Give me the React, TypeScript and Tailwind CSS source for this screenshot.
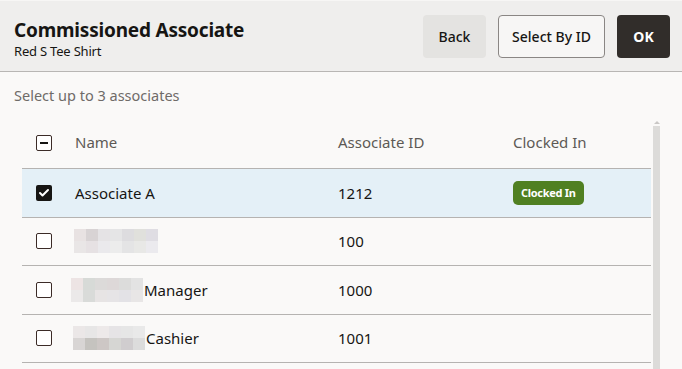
import { Check } from "lucide-react";

type Row = {
    blur?: string[][];
    name: string;
    id: string;
    clocked?: boolean;
    checked?: boolean;
};

const rows: Row[] = [
    { name: "Associate A", id: "1212", clocked: true, checked: true },
    {
        blur: [
            ["#e8e2e2", "#d8d3d4", "#e5e3e5", "#e5e5e6", "#dddcdf", "#e0e0dc", "#dfdde3"],
            ["#e9e6e6", "#e6e1e3", "#eae9ec", "#ececec", "#e4e4e5", "#e8e8e6", "#ebeaee"],
        ],
        name: "",
        id: "100",
    },
    {
        blur: [
            ["#ede4e4", "#d7dad7", "#dcdad9", "#ddd8d8", "#dcdcdb", "#e3e3e3"],
            ["#ebe9e9", "#d9dbd9", "#e7e4e4", "#e6e4e6", "#e3e2e6", "#e8e6e6"],
        ],
        name: "Manager",
        id: "1000",
    },
    {
        blur: [
            ["#ebe7e7", "#e7e6e6", "#ede9e9", "#e6e4e6", "#e6e6e6", "#e9e9e9"],
            ["#d8d5d4", "#c5c3bf", "#cdc7c5", "#d6d6d3", "#d0cdcf", "#dcdcdc"],
        ],
        name: "Cashier",
        id: "1001",
    },
];

function Blur({ cells }: { cells: string[][] }) {
    return (
        <div className="flex flex-col">
            {cells.map((line, i) => (
                <div key={i} className="flex">
                    {line.map((c, j) => (
                        <div key={j} className="w-[12px] h-[12px]" style={{ backgroundColor: c }} />
                    ))}
                </div>
            ))}
        </div>
    );
}

function Box({ state }: { state: "on" | "off" | "mixed" }) {
    if (state === "on") {
        return (
            <div className="w-[16px] h-[16px] rounded-[2px] bg-[#161513] flex items-center justify-center">
                <Check className="w-[12px] h-[12px] text-white" strokeWidth={4} />
            </div>
        );
    }
    return (
        <div className="w-[16px] h-[16px] rounded-[2px] border-[1.5px] border-[#3b2b27] bg-white flex items-center justify-center">
            {state === "mixed" && <div className="w-[8px] h-[2px] bg-[#161513]" />}
        </div>
    );
}

export default function App() {
    return (
        <div className="w-[682px] h-[369px] overflow-hidden bg-[#faf9f8] text-[#161513] font-['Noto_Sans',sans-serif]">
            <div className="h-[72px] bg-[#efeeed] border-t border-t-[#f7f6f5] border-b border-b-[#b8b6b4] flex items-center justify-between pl-[14px] pr-[12px]">
                <div className="flex flex-col self-start mt-[17px]">
                    <span className="text-[19px] font-bold leading-[24px] tracking-[-0.2px]">Commissioned Associate</span>
                    <span className="text-[13px] leading-[18px] tracking-[-0.2px]">Red S Tee Shirt</span>
                </div>
                <div className="flex items-center gap-[12px]">
                    <button className="h-[43px] w-[63px] rounded-[4px] bg-[#e4e3e1] text-[14px] font-medium">Back</button>
                    <button className="h-[43px] w-[107px] rounded-[4px] border border-[#8a8684] bg-[#f7f6f5] text-[14px] font-medium">Select By ID</button>
                    <button className="h-[43px] w-[53px] rounded-[4px] bg-[#312d2a] text-white text-[14px] font-bold">OK</button>
                </div>
            </div>

            <div className="pl-[14px] pt-[13px] text-[14.5px] text-[#6f6b68] leading-[20px]">Select up to 3 associates</div>

            <div className="flex pl-[22px] mt-[12px]">
                <div className="w-[629px]">
                    <div className="grid grid-cols-[53px_263px_175px_1fr] h-[52px] items-center border-b border-[#b5b3b1] text-[15px] text-[#5d5955]">
                        <div className="pl-[14px]"><Box state="mixed" /></div>
                        <div>Name</div>
                        <div>Associate ID</div>
                        <div>Clocked In</div>
                    </div>
                    {rows.map((r, i) => (
                        <div
                            key={i}
                            className={`grid grid-cols-[53px_263px_175px_1fr] h-[48.5px] items-center border-b border-[#b5b3b1] text-[15px] ${r.checked ? "bg-[#e4f0f7]" : ""}`}
                        >
                            <div className="pl-[14px]"><Box state={r.checked ? "on" : "off"} /></div>
                            <div className={`flex items-center ${i === 2 ? "-ml-[4px]" : i === 3 ? "-ml-[2px]" : "-ml-[1px]"}`}>
                                {r.blur && <Blur cells={r.blur} />}
                                <span className="ml-[1px]">{r.name}</span>
                            </div>
                            <div>{r.id}</div>
                            <div>
                                {r.clocked && (
                                    <span className="inline-flex items-center h-[24px] px-[8px] rounded-[5px] bg-[#508022] text-white text-[11px] font-bold tracking-[-0.3px]">
                                        Clocked In
                                    </span>
                                )}
                            </div>
                        </div>
                    ))}
                </div>
                <div className="ml-[2px] w-[7px] flex flex-col items-center pt-[4px]">
                    <div className="w-0 h-0 border-l-[3px] border-r-[3px] border-b-[3px] border-l-transparent border-r-transparent border-b-[#c9c7c5]" />
                    <div className="mt-[2px] w-[7px] h-[300px] bg-[#dcdbd9]" />
                </div>
            </div>
        </div>
    );
}
